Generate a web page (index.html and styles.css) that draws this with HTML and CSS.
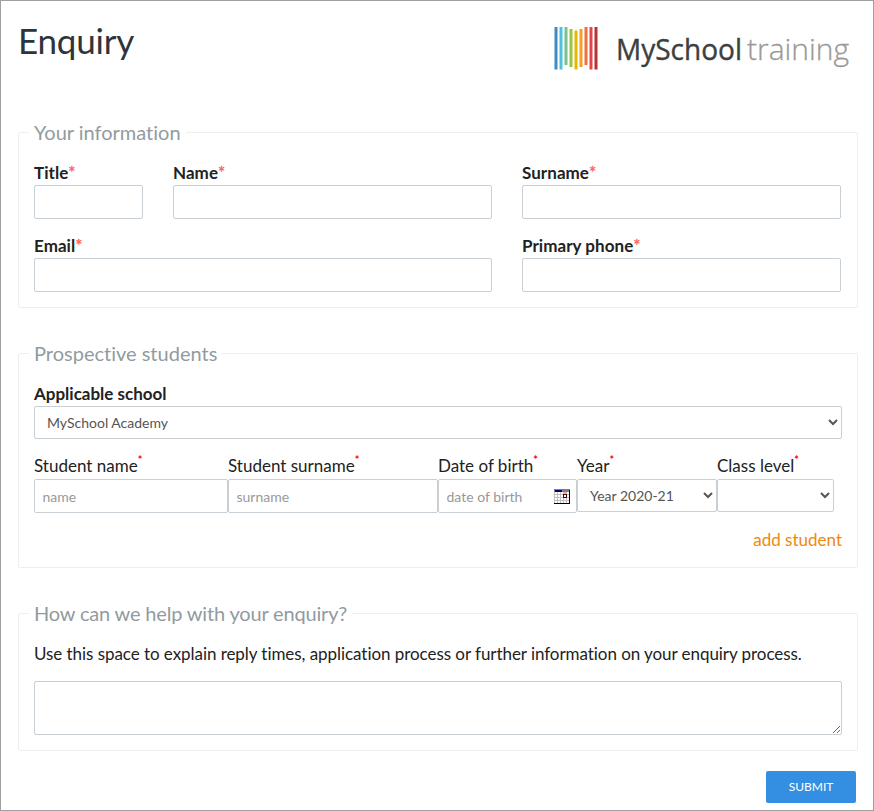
FILE: index.html
```html
<!DOCTYPE html>
<html lang="en">
<head>
    <meta charset="utf-8">
    <title>Enquiry</title>
    <link rel="stylesheet" href="styles.css">
</head>
<body>

<form class="enquiry">
    <div class="header">
        <h1>Enquiry</h1>
        <svg class="logo" width="300" height="50" viewBox="0 0 300 50">
            <rect x="0.5" y="2" width="3" height="42.5" fill="#3d8cc4"/>
            <rect x="5.5" y="2" width="3" height="42.5" fill="#4fc0de"/>
            <rect x="10.5" y="2" width="3" height="38" fill="#72c48c"/>
            <rect x="15.5" y="4" width="3" height="38" fill="#9ac43c"/>
            <rect x="20.5" y="5.5" width="3" height="39" fill="#e6b800"/>
            <rect x="25.5" y="4" width="3" height="38" fill="#f0a030"/>
            <rect x="30.5" y="2" width="3" height="38" fill="#ee7044"/>
            <rect x="35.5" y="2" width="3" height="42.5" fill="#e04848"/>
            <rect x="40.5" y="2" width="3" height="42.5" fill="#b83232"/>
            <text class="logo-name" x="62" y="34.5" textLength="126" lengthAdjust="spacingAndGlyphs">MySchool</text>
            <text class="logo-sub" x="193" y="34.5" textLength="102" lengthAdjust="spacingAndGlyphs">training</text>
        </svg>
    </div>

    <fieldset>
        <legend>Your information</legend>
        <div class="info-grid">
            <div class="field">
                <label for="title">Title<span class="req">*</span></label>
                <input type="text" id="title">
            </div>
            <div class="field">
                <label for="name">Name<span class="req">*</span></label>
                <input type="text" id="name">
            </div>
            <div class="field">
                <label for="surname">Surname<span class="req">*</span></label>
                <input type="text" id="surname">
            </div>
            <div class="field wide">
                <label for="email">Email<span class="req">*</span></label>
                <input type="text" id="email">
            </div>
            <div class="field">
                <label for="phone">Primary phone<span class="req">*</span></label>
                <input type="text" id="phone">
            </div>
        </div>
    </fieldset>

    <fieldset>
        <legend>Prospective students</legend>
        <div class="field school">
            <label for="school">Applicable school</label>
            <select id="school">
                <option>MySchool Academy</option>
            </select>
        </div>
        <div class="student-row">
            <div class="field">
                <label for="student-name">Student name<sup>*</sup></label>
                <input type="text" id="student-name" placeholder="name">
            </div>
            <div class="field">
                <label for="student-surname">Student surname<sup>*</sup></label>
                <input type="text" id="student-surname" placeholder="surname">
            </div>
            <div class="field">
                <label for="dob">Date of birth<sup>*</sup></label>
                <div class="date-box">
                    <input type="text" id="dob" placeholder="date of birth">
                    <svg class="calendar" width="16" height="15" viewBox="0 0 16 15" shape-rendering="crispEdges">
                        <rect width="16" height="15" fill="#c0c0c0"/>
                        <path fill="#fff" d="M1 3h2v2H1zM4 3h2v2H4zM7 3h2v2H7zM13 3h2v2h-2zM1 6h2v2H1zM4 6h2v2H4zM7 6h2v2H7zM13 6h2v2h-2zM1 9h2v2H1zM4 9h2v2H4zM7 9h2v2H7zM10 9h2v2h-2zM13 9h2v2h-2zM1 12h2v2H1zM4 12h2v2H4zM7 12h2v2H7zM10 12h2v2h-2zM13 12h2v2h-2z"/>
                        <rect width="16" height="3" fill="#808080"/>
                        <rect x="1" y="1" width="7" height="2" fill="#000080"/>
                        <rect x="9" y="5" width="4" height="4" fill="#600000"/>
                        <rect x="10" y="6" width="2" height="2" fill="#fff"/>
                        <path fill="#000" d="M15 1h1v14H0v-1h15z"/>
                    </svg>
                </div>
            </div>
            <div class="field">
                <label for="year">Year<sup>*</sup></label>
                <select id="year">
                    <option>Year 2020-21</option>
                </select>
            </div>
            <div class="field">
                <label for="level">Class level<sup>*</sup></label>
                <select id="level">
                    <option></option>
                </select>
            </div>
        </div>
        <div class="add-row"><a class="add-student">add student</a></div>
    </fieldset>

    <fieldset>
        <legend class="help">How can we help with your enquiry?</legend>
        <p>Use this space to explain reply times, application process or further information on your enquiry process.</p>
        <textarea></textarea>
    </fieldset>

    <div class="actions">
        <button type="button">SUBMIT</button>
    </div>
</form>

</body>
</html>
```

FILE: styles.css
```css
* {
    box-sizing: border-box;
}
body {
    margin: 0;
    font-family: Lato, sans-serif;
    font-size: 17px;
    line-height: 24px;
    color: #222;
    background: #fff;
    font-variant-ligatures: none;
}
.enquiry {
    height: 811px;
    padding: 0 15px 0 17px;
    border: 1px solid #a0a0a0;
    overflow: hidden;
}
.header {
    display: flex;
    justify-content: space-between;
    height: 121px;
    padding: 18px 4px 0 0;
}
h1 {
    margin: 0;
    font-size: 35px;
    font-weight: normal;
    line-height: 42px;
    letter-spacing: -0.2px;
    color: #2d353c;
}
.logo {
    margin-top: 6px;
}
.logo-name, .logo-sub {
    font-family: "Open Sans", sans-serif;
    font-size: 30px;
}
.logo-name {
    fill: #3c4040;
    stroke: #3c4040;
    stroke-width: 0.4px;
}
.logo-sub {
    font-weight: 300;
    fill: #999;
    stroke: #999;
    stroke-width: 0.3px;
}

/* Fieldsets */
fieldset {
    width: 840px;
    margin: 0 0 35px;
    padding: 18px 15px 15px;
    border: 1px solid #eee;
    border-radius: 2px;
}
legend {
    margin-left: -5px;
    padding: 0 5px;
    font-size: 20px;
    line-height: 21px;
    color: #919b9f;
}
.help {
    letter-spacing: -0.17px;
}
.info-grid {
    display: grid;
    grid-template-columns: 109px 319px 319px;
    gap: 15px 30px;
}
.wide {
    grid-column: span 2;
}
label {
    display: block;
    height: 24px;
    font-weight: bold;
    white-space: nowrap;
}
.info-grid label {
    letter-spacing: 0.05px;
}
.req {
    font-weight: normal;
    color: #ff5b57;
    -webkit-text-stroke: 0.3px #ff5b57;
}
input, select, textarea {
    display: block;
    width: 100%;
    margin: 0;
    border: 1px solid #c8cfd5;
    border-radius: 2px;
    background: #fff;
    font-family: inherit;
    font-size: 14px;
    color: #555;
}
input {
    height: 34px;
    padding: 0 7.5px;
}
input::placeholder {
    color: #999;
}
select {
    height: 33px;
    padding: 0 1px 0 8px;
}

/* Students */
.school {
    margin-bottom: 15px;
}
.student-row {
    display: grid;
    grid-template-columns: 194px 210px 139px 140px 117px;
}
.student-row label {
    height: 25px;
    font-weight: normal;
}
sup {
    font-size: 11px;
    font-weight: bold;
    line-height: 0;
    vertical-align: 8px;
    color: red;
}
.date-box {
    position: relative;
}
.calendar {
    position: absolute;
    top: 10px;
    right: 7px;
}
.add-row {
    margin-top: 15px;
    text-align: right;
}
.add-student {
    color: #f0880e;
}

/* Enquiry text */
p {
    margin: 0 0 15px;
    letter-spacing: -0.055px;
}
textarea {
    height: 54px;
}
.actions {
    display: flex;
    justify-content: flex-end;
    margin-top: -15px;
    padding-right: 2px;
}
button {
    width: 90px;
    height: 32px;
    padding: 0 0 1px;
    border: none;
    border-radius: 2px;
    background: #348fe2;
    color: #fff;
    font-family: inherit;
    font-size: 12px;
}
```
